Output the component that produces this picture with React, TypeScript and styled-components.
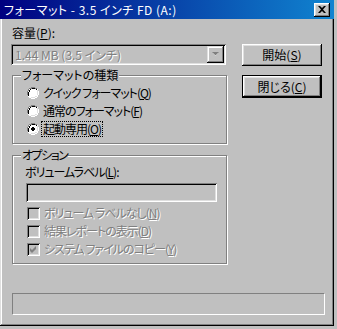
import React from 'react';
import styled, { createGlobalStyle } from 'styled-components';

const GlobalStyle = createGlobalStyle`
  html, body {
    margin: 0;
    padding: 0;
    background: #c0c0c0;
  }
  body {
    font-family: "Noto Sans CJK JP", "Liberation Sans", sans-serif;
    font-size: 12px;
    font-feature-settings: "palt";
    color: #000;
  }
  u {
    text-decoration: underline;
    text-underline-offset: 1px;
  }
`;

const Window = styled.div`
  width: 334px;
  height: 326px;
  box-sizing: border-box;
  padding: 0 2px 2px 2px;
  background: #c0c0c0;
  box-shadow: inset -1px -1px #000, inset 1px 1px #dfdfdf,
    inset -2px -2px #808080, inset 2px 2px #fff;
  display: flex;
  flex-direction: column;
`;

const TitleBar = styled.div`
  height: 19px;
  margin: 0 -2px 0 -2px;
  padding: 0 4px 0 4px;
  background: linear-gradient(to right, #000080, #1084d0);
  display: flex;
  align-items: center;
  justify-content: space-between;
`;

const Title = styled.span`
  color: #fff;
  font-size: 12px;
  line-height: 14px;
  letter-spacing: 0.5px;
  white-space: nowrap;
`;

const CloseButton = styled.div`
  width: 16px;
  height: 14px;
  box-sizing: border-box;
  background: #c0c0c0;
  box-shadow: inset -1px -1px #000, inset 1px 1px #fff,
    inset -2px -2px #808080, inset 2px 2px #dfdfdf;
  display: flex;
  align-items: center;
  justify-content: center;
`;

const Content = styled.div`
  padding: 7px 0 0 9px;
  display: flex;
  flex-direction: column;
`;

const TopRow = styled.div`
  display: flex;
`;

const LeftCol = styled.div`
  width: 216px;
  display: flex;
  flex-direction: column;
`;

const ButtonCol = styled.div`
  margin-left: 15px;
  padding-top: 18px;
  display: flex;
  flex-direction: column;
  gap: 9px;
`;

const Label = styled.div<{ $indent?: number; $tight?: boolean }>`
  height: 14px;
  line-height: 14px;
  margin-left: ${(p) => p.$indent ?? 1}px;
  letter-spacing: ${(p) => (p.$tight ? '-1px' : '0')};
  white-space: nowrap;
`;

const Sunken = styled.div`
  box-sizing: border-box;
  background: #c0c0c0;
  box-shadow: inset 1px 1px #808080, inset -1px -1px #fff,
    inset 2px 2px #000, inset -2px -2px #dfdfdf;
`;

const Combo = styled(Sunken)`
  margin-top: 4px;
  width: 215px;
  height: 21px;
  padding: 2px 2px 2px 4px;
  display: flex;
  align-items: center;
  justify-content: space-between;
`;

const DisabledText = styled.span`
  color: #808080;
  text-shadow: 1px 1px #fff;
  white-space: nowrap;
  line-height: 14px;
`;

const ComboArrow = styled.div`
  width: 17px;
  height: 17px;
  box-sizing: border-box;
  background: #c0c0c0;
  box-shadow: inset -1px -1px #000, inset 1px 1px #dfdfdf,
    inset -2px -2px #808080, inset 2px 2px #fff;
  display: flex;
  align-items: center;
  justify-content: center;
`;

const Group = styled.div<{ $top: number; $height: number }>`
  position: relative;
  margin: ${(p) => p.$top}px 0 0 1px;
  width: 215px;
  height: ${(p) => p.$height}px;
  box-sizing: border-box;
  border: 1px solid #808080;
  box-shadow: inset 1px 1px #fff, 1px 1px #fff;
  display: flex;
  flex-direction: column;
`;

const Caption = styled.span<{ $tight?: boolean }>`
  position: absolute;
  top: -8px;
  left: 8px;
  padding: 0 1px;
  background: #c0c0c0;
  line-height: 14px;
  letter-spacing: ${(p) => (p.$tight ? '-1.5px' : '0')};
  white-space: nowrap;
`;

const RadioList = styled.div`
  padding: 8px 0 0 14px;
  display: flex;
  flex-direction: column;
`;

const OptionRow = styled.div`
  height: 18px;
  display: flex;
  align-items: center;
  gap: 4px;
  white-space: nowrap;
`;

const OptionText = styled.span<{ $focus?: boolean; $disabled?: boolean }>`
  line-height: 14px;
  padding: 0 1px;
  margin-left: -1px;
  letter-spacing: -1px;
  outline: ${(p) => (p.$focus ? '1px dotted #000' : 'none')};
  color: ${(p) => (p.$disabled ? '#808080' : '#000')};
  text-shadow: ${(p) => (p.$disabled ? '1px 1px #fff' : 'none')};
`;

const OptionsBody = styled.div`
  padding: 9px 0 0 12px;
  display: flex;
  flex-direction: column;
`;

const TextField = styled(Sunken)`
  margin: 4px 0 0 1px;
  width: 191px;
  height: 19px;
`;

const CheckList = styled.div`
  margin-top: 2px;
  margin-left: 2px;
  display: flex;
  flex-direction: column;
`;

const CheckBox = styled(Sunken)`
  width: 13px;
  height: 13px;
  flex: none;
  display: flex;
  align-items: center;
  justify-content: center;
`;

const Button = styled.div<{ $default?: boolean }>`
  width: 80px;
  height: ${(p) => (p.$default ? 23 : 22)}px;
  box-sizing: border-box;
  background: #c0c0c0;
  display: flex;
  align-items: center;
  justify-content: center;
  line-height: 14px;
  border: ${(p) => (p.$default ? '1px solid #000' : 'none')};
  box-shadow: inset -1px -1px #000, inset 1px 1px #fff,
    inset -2px -2px #808080, inset 2px 2px #dfdfdf;
`;

const Progress = styled.div`
  margin: 29px 0 0 1px;
  width: 313px;
  height: 22px;
  box-sizing: border-box;
  border-top: 1px solid #808080;
  border-left: 1px solid #808080;
  border-bottom: 1px solid #fff;
  border-right: 1px solid #fff;
`;

const Radio = ({ checked }: { checked?: boolean }) => (
  <svg width="12" height="12" viewBox="0 0 12 12" style={{ flex: 'none' }}>
    <path d="M4 0h4v1h2v1h1v2h1v4h-1v2h-1v1h-2v1h-4v-1h-2v-1h-1v-2h-1v-4h1v-2h1v-1h2z" fill="#fff" />
    <path d="M4 0h4v1h2v1h-2v-1h-4v1h-2v2h-1v4h-1v-4h1v-2h1v-1h2z" fill="#808080" />
    <path d="M4 1h4v1h2v1h-1v-1h-5v1h-1v2h-1v4h-1v-4h1v-2h1v-1h2z" fill="#000" />
    <path d="M10 3h1v2h0v3h-1v2h-2v1h-4v-1h4v-1h2v-2z" fill="#dfdfdf" />
    {checked && <path d="M5 4h2v1h1v2h-1v1h-2v-1h-1v-2h1z" fill="#000" />}
  </svg>
);

const Check = () => (
  <svg width="7" height="7" viewBox="0 0 7 7">
    <path d="M6 0v3l-4 4l-2-2v-3l2 2z" fill="#808080" />
  </svg>
);

const App = () => {
  return (
    <>
      <GlobalStyle />
      <Window>
        <TitleBar>
          <Title>フォーマット - 3.5 インチ FD (A:)</Title>
          <CloseButton>
            <svg width="8" height="7" viewBox="0 0 8 7">
              <path d="M0 0h2l2 2l2-2h2l-3 3.5l3 3.5h-2l-2-2l-2 2h-2l3-3.5z" fill="#000" />
            </svg>
          </CloseButton>
        </TitleBar>
        <Content>
          <TopRow>
            <LeftCol>
              <Label $indent={1}>
                容量(<u>P</u>):
              </Label>
              <Combo>
                <DisabledText>1.44 MB (3.5 インチ)</DisabledText>
                <ComboArrow>
                  <svg width="8" height="5" viewBox="0 0 8 5">
                    <path d="M1 1h5l-2.5 3z" fill="#fff" />
                    <path d="M0 0h7l-3.5 3.5z" fill="#808080" />
                  </svg>
                </ComboArrow>
              </Combo>
              <Group $top={10} $height={69}>
                <Caption>フォーマットの種類</Caption>
                <RadioList>
                  <OptionRow>
                    <Radio />
                    <OptionText>
                      クイック フォーマット(<u>Q</u>)
                    </OptionText>
                  </OptionRow>
                  <OptionRow>
                    <Radio />
                    <OptionText>
                      通常のフォーマット(<u>F</u>)
                    </OptionText>
                  </OptionRow>
                  <OptionRow>
                    <Radio checked />
                    <OptionText $focus>
                      起動専用(<u>O</u>)
                    </OptionText>
                  </OptionRow>
                </RadioList>
              </Group>
              <Group $top={11} $height={109}>
                <Caption $tight>オプション</Caption>
                <OptionsBody>
                  <Label $indent={0} $tight>
                    ボリュームラベル(<u>L</u>):
                  </Label>
                  <TextField />
                  <CheckList>
                    <OptionRow>
                      <CheckBox />
                      <OptionText $disabled>
                        ボリューム ラベルなし(<u>N</u>)
                      </OptionText>
                    </OptionRow>
                    <OptionRow>
                      <CheckBox />
                      <OptionText $disabled>
                        結果レポートの表示(<u>D</u>)
                      </OptionText>
                    </OptionRow>
                    <OptionRow>
                      <CheckBox>
                        <Check />
                      </CheckBox>
                      <OptionText $disabled>
                        システム ファイルのコピー(<u>Y</u>)
                      </OptionText>
                    </OptionRow>
                  </CheckList>
                </OptionsBody>
              </Group>
            </LeftCol>
            <ButtonCol>
              <Button>
                開始(<u>S</u>)
              </Button>
              <Button $default>
                閉じる(<u>C</u>)
              </Button>
            </ButtonCol>
          </TopRow>
          <Progress />
        </Content>
      </Window>
    </>
  );
};

export default App;
